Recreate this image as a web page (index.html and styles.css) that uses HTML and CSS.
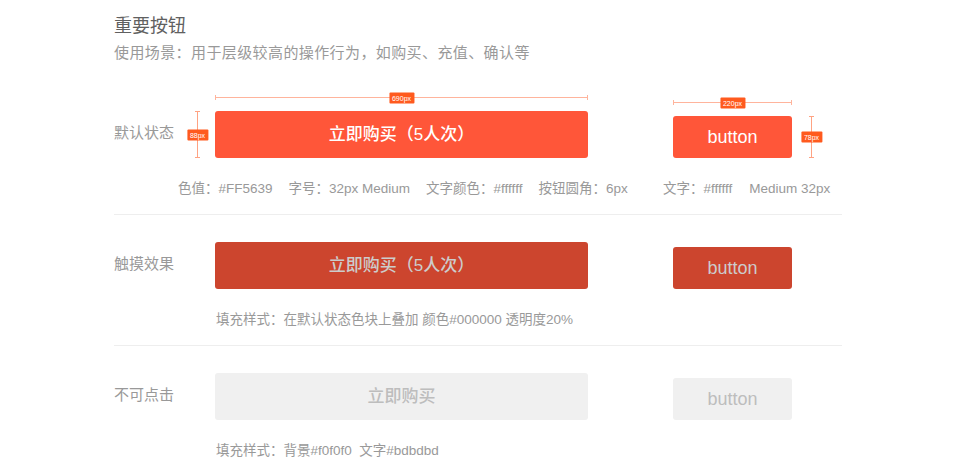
FILE: index.html
```html
<!DOCTYPE html>
<html lang="zh-CN">
<head>
    <meta charset="UTF-8">
    <meta name="viewport" content="width=device-width, initial-scale=1.0">
    <title>重要按钮</title>
    <link rel="stylesheet" href="styles.css">
</head>
<body>
    <div class="page">
        <div class="header">
            <h1>重要按钮</h1>
            <p class="desc">使用场景：用于层级较高的操作行为，如购买、充值、确认等</p>
        </div>

        <div class="section first">
            <div class="row">
                <div class="label">默认状态</div>
                <div class="btn-wrap">
                    <div class="dim-w"><span class="tag">690px</span></div>
                    <div class="dim-h left"><span class="tag">88px</span></div>
                    <div class="btn big normal">立即购买（5人次）</div>
                </div>
                <div class="btn-wrap small-wrap">
                    <div class="dim-w"><span class="tag">220px</span></div>
                    <div class="dim-h right"><span class="tag">78px</span></div>
                    <div class="btn small normal">button</div>
                </div>
            </div>
            <div class="spec">
                <div class="spec-main">
                    <span>色值：#FF5639</span>
                    <span>字号：32px Medium</span>
                    <span>文字颜色：#ffffff</span>
                    <span>按钮圆角：6px</span>
                </div>
                <div class="spec-side">
                    <span>文字：#ffffff</span>
                    <span>Medium 32px</span>
                </div>
            </div>
        </div>

        <div class="section">
            <div class="row">
                <div class="label">触摸效果</div>
                <div class="btn big pressed">立即购买（5人次）</div>
                <div class="btn small pressed">button</div>
            </div>
            <p class="note">填充样式：在默认状态色块上叠加 颜色#000000 透明度20%</p>
        </div>

        <div class="section last">
            <div class="row">
                <div class="label">不可点击</div>
                <div class="btn big disabled">立即购买</div>
                <div class="btn small disabled">button</div>
            </div>
            <p class="note">填充样式：背景#f0f0f0&nbsp;&nbsp;文字#bdbdbd</p>
        </div>
    </div>
</body>
</html>
```

FILE: styles.css
```css
body {
    margin: 0;
    background: #ffffff;
    font-family: "Liberation Sans", "Noto Sans CJK SC", sans-serif;
    color: #999999;
}

.page {
    width: 728px;
    margin-left: 114px;
    padding-top: 14px;
}

h1 {
    margin: 0;
    font-size: 18px;
    line-height: 24px;
    font-weight: normal;
    color: #606060;
}

.desc {
    margin: 5px 0 0;
    font-size: 15px;
    line-height: 20px;
    letter-spacing: 0.4px;
    color: #999999;
}

.section {
    padding: 27px 0 16px;
    border-bottom: 1px solid #eeeeee;
}

.section.first {
    padding-top: 48px;
}

.section.last {
    border-bottom: none;
}

.row {
    display: flex;
    align-items: flex-end;
    height: 47px;
}

.label {
    width: 101px;
    flex-shrink: 0;
    align-self: center;
    margin-top: -3px;
    font-size: 15px;
    line-height: 20px;
    color: #999999;
}

.btn-wrap {
    position: relative;
}

.small-wrap {
    margin-left: 85px;
}

.btn {
    flex-shrink: 0;
    border-radius: 3px;
    text-align: center;
    color: #ffffff;
}

.btn.big {
    width: 373px;
    height: 47px;
    line-height: 47px;
    font-size: 17px;
    font-weight: 500;
}

.btn.small {
    width: 119px;
    height: 42px;
    line-height: 42px;
    font-size: 18px;
}

.row > .btn.small {
    margin-left: 85px;
}

.btn.normal {
    background: #ff5639;
}

.btn.pressed {
    background: #cc452e;
    color: #cccccc;
}

.btn.disabled {
    background: #f0f0f0;
    color: #bdbdbd;
}

/* dimension annotations */
.dim-w {
    position: absolute;
    left: 0;
    right: 0;
    top: -16px;
    height: 5px;
    border-left: 1px solid #ffb49c;
    border-right: 1px solid #ffb49c;
    box-sizing: border-box;
}

.dim-w::before {
    content: "";
    position: absolute;
    left: 0;
    right: 0;
    top: 2px;
    height: 1px;
    background: #ffb49c;
}

.dim-h {
    position: absolute;
    bottom: 0;
    top: 0;
    width: 5px;
    border-top: 1px solid #ffa383;
    border-bottom: 1px solid #ffa383;
    box-sizing: border-box;
}

.dim-h::before {
    content: "";
    position: absolute;
    top: 0;
    bottom: 0;
    left: 2px;
    width: 1px;
    background: #ffa383;
}

.dim-h.left {
    left: -20px;
}

.dim-h.right {
    left: calc(100% + 17px);
}

.tag {
    position: absolute;
    left: 50%;
    top: 50%;
    transform: translate(-50%, -50%);
    padding: 0 3px;
    background: #ff5a1e;
    color: #ffffff;
    font-size: 7px;
    line-height: 11px;
    border-radius: 1px;
    white-space: nowrap;
    z-index: 1;
}

.spec {
    display: flex;
    margin: 22px 0 0 64px;
    font-size: 13.5px;
    line-height: 18px;
    color: #999999;
    white-space: nowrap;
}

.spec-main {
    display: flex;
    gap: 16px;
    width: 485px;
}

.spec-side {
    display: flex;
    gap: 17px;
}

.note {
    margin: 22px 0 0 102px;
    font-size: 13.5px;
    line-height: 18px;
    color: #999999;
    white-space: nowrap;
}
```
